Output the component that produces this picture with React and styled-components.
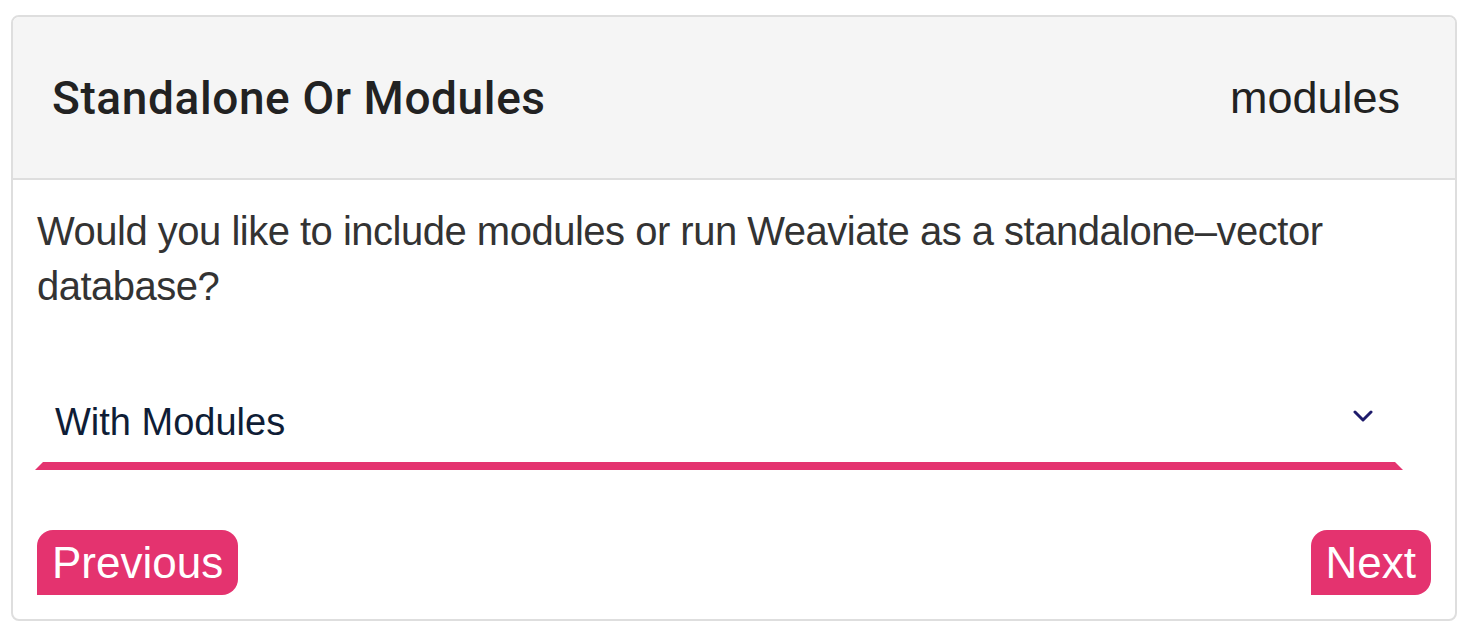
import React from "react";
import styled, { createGlobalStyle } from "styled-components";

const GlobalStyle = createGlobalStyle`
  html, body { margin: 0; padding: 0; background: #ffffff; }
  body { font-family: "Liberation Sans", Arial, sans-serif; }
  * { box-sizing: border-box; }
`;

const Page = styled.div`
  padding: 15px 11px 0 11px;
`;

const Card = styled.section`
  width: 1446px;
  border: 2px solid #dedede;
  border-radius: 8px;
  overflow: hidden;
  background: #ffffff;
`;

const Header = styled.header`
  height: 163px;
  display: flex;
  align-items: center;
  justify-content: space-between;
  padding: 0 55px 0 39px;
  background: #f5f5f5;
  border-bottom: 2px solid #dedede;
`;

const Title = styled.h2`
  margin: 0;
  font-family: Roboto, "Liberation Sans", Arial, sans-serif;
  font-size: 46px;
  font-weight: 500;
  color: #222222;
  letter-spacing: 0.6px;
`;

const Tag = styled.span`
  font-size: 45px;
  font-weight: 400;
  color: #222222;
`;

const Body = styled.div`
  padding: 24px 24px 24px 24px;
  display: flex;
  flex-direction: column;
`;

const Question = styled.p`
  margin: 0;
  font-size: 40px;
  letter-spacing: -0.5px;
  line-height: 55px;
  color: #333333;
`;

const Select = styled.div`
  margin: 66px 28px 0 -2px;
  height: 90px;
  display: flex;
  align-items: center;
  justify-content: space-between;
  padding: 0 22px 0 12px;
  border-left: 8px solid transparent;
  border-right: 8px solid transparent;
  border-bottom: 8px solid #e4336f;
`;

const SelectValue = styled.span`
  font-size: 38px;
  color: #0f1d36;
  margin-top: 2px;
`;

const Chevron = styled.svg`
  width: 20px;
  height: 12px;
  margin-bottom: 10px;
`;

const Actions = styled.div`
  margin-top: 60px;
  display: flex;
  justify-content: space-between;
`;

const NavButton = styled.button`
  height: 65px;
  padding: 0 15px;
  border: none;
  border-radius: 16px 16px 16px 0;
  background: #e4336f;
  color: #ffffff;
  font-family: "Liberation Sans", Arial, sans-serif;
  font-size: 44px;
  line-height: 65px;
  cursor: pointer;
`;

export default function App() {
  return (
    <>
      <GlobalStyle />
      <Page>
        <Card>
          <Header>
            <Title>Standalone Or Modules</Title>
            <Tag>modules</Tag>
          </Header>
          <Body>
            <Question>
              Would you like to include modules or run Weaviate as a standalone–vector database?
            </Question>
            <Select>
              <SelectValue>With Modules</SelectValue>
              <Chevron viewBox="0 0 20 12" aria-hidden="true">
                <polyline
                  points="2,2 10,10 18,2"
                  fill="none"
                  stroke="#1e1b6b"
                  strokeWidth="3"
                  strokeLinecap="round"
                  strokeLinejoin="round"
                />
              </Chevron>
            </Select>
            <Actions>
              <NavButton>Previous</NavButton>
              <NavButton>Next</NavButton>
            </Actions>
          </Body>
        </Card>
      </Page>
    </>
  );
}
